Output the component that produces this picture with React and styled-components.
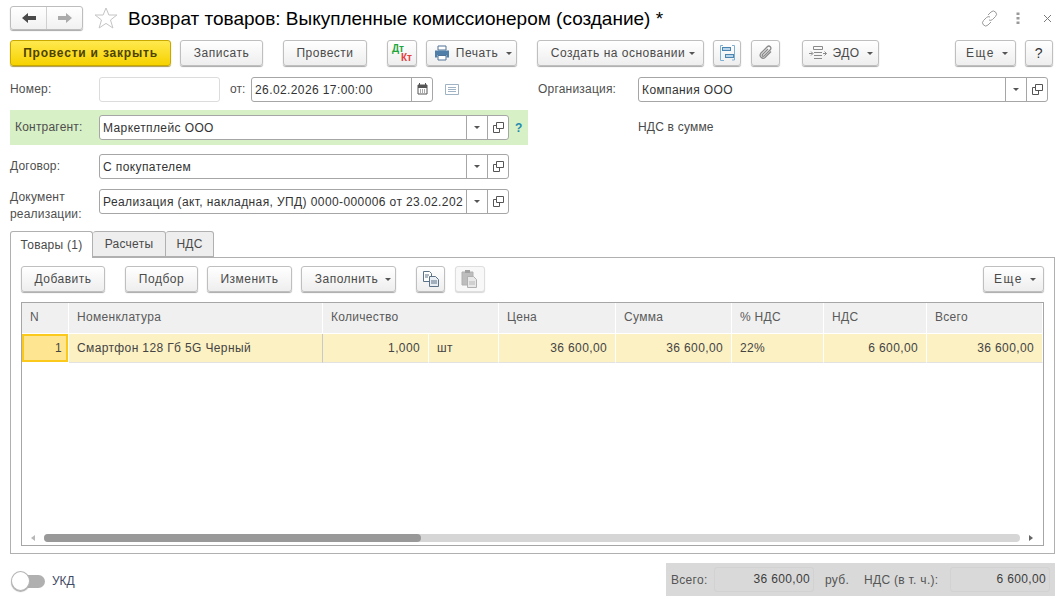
import React from 'react';
import styled, { createGlobalStyle } from 'styled-components';

const GlobalStyle = createGlobalStyle`
    html, body {
        margin: 0;
        padding: 0;
        background: #fff;
    }
    body {
        font-family: "Liberation Sans", Arial, sans-serif;
        font-size: 12px;
        color: #4a4a4a;
    }
`;

const Page = styled.div`
    width: 1063px;
    height: 605px;
    overflow: hidden;
    box-sizing: border-box;
    padding: 6px 8px 0 10px;
    background: #fff;
`;

const Header = styled.div`
    display: flex;
    align-items: center;
    height: 24px;
`;

const NavGroup = styled.div`
    display: flex;
    width: 73px;
    height: 24px;
    box-sizing: border-box;
    border: 1px solid #bdbdbd;
    border-radius: 3px;
    background: linear-gradient(#fff, #f1f1f1);
    box-shadow: 0 1px 1px #a8a8a8;
`;

const NavButton = styled.div`
    flex: 1;
    display: flex;
    align-items: center;
    justify-content: center;
    & + & {
        border-left: 1px solid #d0d0d0;
    }
`;

const StarBox = styled.div`
    display: flex;
    margin-left: 11px;
    width: 24px;
`;

const Title = styled.div`
    margin-left: 10px;
    font-size: 19px;
    color: #000;
    white-space: nowrap;
    position: relative;
    top: 1px;
`;

const HeaderTools = styled.div`
    margin-left: auto;
    padding-right: 3px;
    display: flex;
    align-items: center;
    gap: 18px;
`;

const Toolbar = styled.div`
    display: flex;
    align-items: stretch;
    height: 26px;
    margin-top: ${(p) => p.$top || 0}px;
`;

const Btn = styled.div`
    box-sizing: border-box;
    display: flex;
    align-items: center;
    justify-content: center;
    gap: ${(p) => p.$gap || 0}px;
    width: ${(p) => p.$w}px;
    margin-left: ${(p) => p.$ml || 0}px;
    padding-left: ${(p) => p.$pl || 0}px;
    height: 26px;
    border: 1px solid #bfbfbf;
    border-radius: 3px;
    background: linear-gradient(#fff, #eeeeee);
    box-shadow: 0 1px 1px #a9a9a9;
    color: #4a4a4a;
    white-space: nowrap;
    letter-spacing: ${(p) => p.$ls || 0.5}px;
    ${(p) => p.$off && 'box-shadow: 0 1px 1px #d8d8d8; border-color: #dedede; background: #f8f8f8;'}
`;

const PrimaryBtn = styled(Btn)`
    border-color: #c9a800;
    background: linear-gradient(#ffe94f, #f6d200);
    box-shadow: 0 1px 1px #a89a50;
    color: #4d4300;
    font-weight: bold;
    letter-spacing: 0.8px;
`;

const HelpBtn = styled(Btn)`
    font-size: 14px;
    color: #333;
`;

const RightBtn = styled(Btn)`
    margin-left: auto;
`;

const Caret = styled.span`
    display: inline-block;
    width: 0;
    height: 0;
    margin-left: ${(p) => p.$ml ?? 2}px;
    border-left: 3px solid transparent;
    border-right: 3px solid transparent;
    border-top: 3px solid #555;
`;

const DtKt = styled.div`
    position: relative;
    width: 20px;
    height: 18px;
    font-size: 10px;
    font-weight: bold;
    letter-spacing: 0;
`;

const Dt = styled.span`
    position: absolute;
    left: 0;
    top: -1px;
    color: #1fa53a;
`;

const Kt = styled.span`
    position: absolute;
    right: 0;
    bottom: -1px;
    color: #e2403c;
`;

const FormArea = styled.div`
    display: flex;
    margin-top: 10px;
    height: 148px;
`;

const LeftColumn = styled.div`
    width: 518px;
`;

const RightColumn = styled.div`
    margin-left: 10px;
`;

const FormRow = styled.div`
    display: flex;
    align-items: center;
    height: ${(p) => p.$h || 26}px;
    margin-top: ${(p) => p.$top || 0}px;
`;

const GreenRow = styled(FormRow)`
    background: #d7f0c6;
    padding-left: 5px;
    width: 518px;
    box-sizing: border-box;
`;

const Label = styled.div`
    width: ${(p) => p.$w}px;
    flex: none;
    color: #4f4f4f;
    line-height: 17px;
    letter-spacing: 0.2px;
`;

const TwoLineLabel = styled(Label)`
    margin-top: 8px;
`;

const Field = styled.div`
    display: flex;
    box-sizing: border-box;
    width: ${(p) => p.$w}px;
    height: ${(p) => p.$h || 25}px;
    border: 1px solid ${(p) => (p.$light ? '#dcdcdc' : '#a6a6a6')};
    border-radius: 3px;
    background: #fff;
    flex: none;
`;

const FieldValue = styled.div`
    flex: 1;
    min-width: 0;
    padding-left: 3px;
    line-height: 24px;
    color: #333;
    white-space: nowrap;
    overflow: hidden;
    letter-spacing: 0.4px;
`;

const FieldAddon = styled.div`
    box-sizing: border-box;
    flex: none;
    width: 21px;
    display: flex;
    align-items: center;
    justify-content: center;
    border-left: 1px solid #a6a6a6;
`;

const OtLabel = styled.div`
    margin: 0 5px 0 10px;
    width: 16px;
    color: #4f4f4f;
`;

const NoteBox = styled.div`
    display: flex;
    margin-left: 12px;
`;

const Help = styled.div`
    margin-left: 6px;
    color: #1f8ab0;
    font-weight: bold;
    font-size: 12px;
`;

const VatNote = styled.div`
    margin: 18px 0 0 100px;
    color: #4a4a4a;
    letter-spacing: 0.2px;
`;

const Tabs = styled.div`
    display: flex;
    height: 27px;
    margin-top: 7px;
    position: relative;
    z-index: 1;
`;

const Tab = styled.div`
    box-sizing: border-box;
    width: ${(p) => p.$w}px;
    height: ${(p) => (p.$active ? 27 : 26)}px;
    display: flex;
    align-items: center;
    justify-content: center;
    border: 1px solid #b0b0b0;
    border-left-width: ${(p) => (p.$first ? 1 : 0)}px;
    border-bottom: ${(p) => (p.$active ? 'none' : '1px solid #b0b0b0')};
    border-radius: 3px 3px 0 0;
    background: ${(p) => (p.$active ? '#fff' : '#eeeeee')};
    color: #4a4a4a;
    letter-spacing: 0.25px;
`;

const Panel = styled.div`
    box-sizing: border-box;
    width: 1045px;
    height: 297px;
    margin-top: -1px;
    border: 1px solid #b0b0b0;
    padding: 8px 10px 8px 10px;
`;

const TableBox = styled.div`
    box-sizing: border-box;
    position: relative;
    width: 1023px;
    height: 244px;
    margin-top: 10px;
    border: 1px solid #a6a6a6;
    overflow: hidden;
`;

const GridRow = styled.div`
    display: grid;
    grid-template-columns: 47px 254px 106px 70px 117px 116px 92px 103px 116px;
    height: ${(p) => p.$h}px;
`;

const HeadCell = styled.div`
    grid-column: span ${(p) => p.$span || 1};
    display: flex;
    align-items: center;
    padding: 0 0 2px 8px;
    box-sizing: border-box;
    background: #f0f0f0;
    border-right: 1px solid #fff;
    border-bottom: 1px solid #fff;
    color: #5a5a5a;
    letter-spacing: 0.3px;
`;

const Cell = styled.div`
    display: flex;
    align-items: center;
    box-sizing: border-box;
    justify-content: ${(p) => (p.$right ? 'flex-end' : 'flex-start')};
    padding: 0 8px;
    background: #fcf1c3;
    border-right: 1px solid ${(p) => (p.$dark ? '#c9c9c9' : '#fff')};
    border-bottom: 1px solid #e2e2e2;
    color: #444;
    white-space: nowrap;
    letter-spacing: 0.37px;
`;

const CurrentCell = styled(Cell)`
    background: #fee591;
    border: 2px solid #fbc91b;
    padding: 0 4px;
    margin-right: 1px;
    margin-bottom: 1px;
`;

const ScrollBar = styled.div`
    position: absolute;
    left: 0;
    right: 0;
    bottom: 3px;
    height: 8px;
    display: flex;
    align-items: center;
`;

const ScrollArrow = styled.span`
    flex: none;
    width: 0;
    height: 0;
    margin-left: ${(p) => p.$ml}px;
    border-top: 3px solid transparent;
    border-bottom: 3px solid transparent;
    ${(p) => (p.$left ? 'border-right: 4px solid #b8b8b8;' : 'border-left: 4px solid #666;')}
`;

const ScrollTrack = styled.div`
    flex: none;
    width: 976px;
    height: 8px;
    margin-left: 9px;
    border-radius: 4px;
    background: #d6d6d6;
`;

const ScrollThumb = styled.div`
    height: 8px;
    border-radius: 4px;
    background: #999;
`;

const Footer = styled.div`
    display: flex;
    align-items: center;
    height: 33px;
    margin-top: 9px;
    padding-left: 1px;
`;

const SwitchBox = styled.div`
    position: relative;
    width: 34px;
    height: 20px;
    flex: none;
    margin-top: 2px;
`;

const SwitchTrack = styled.div`
    position: absolute;
    left: 8px;
    right: 0;
    top: 4px;
    height: 13px;
    border-radius: 7px;
    background: #b0b0b0;
`;

const SwitchKnob = styled.div`
    position: absolute;
    left: 0;
    top: 0;
    box-sizing: border-box;
    width: 19px;
    height: 20px;
    border-radius: 50%;
    border: 1px solid #b5b5b5;
    background: #fff;
    box-shadow: 0 1px 1px #aaa;
`;

const SwitchLabel = styled.div`
    margin: 2px 0 0 7px;
    color: #3f4a66;
`;

const Totals = styled.div`
    display: flex;
    align-items: center;
    box-sizing: border-box;
    width: 389px;
    height: 33px;
    margin-left: auto;
    padding-left: 5px;
    background: #d9d9d9;
`;

const TotalLabel = styled.div`
    width: ${(p) => p.$w}px;
    flex: none;
    color: #555;
    letter-spacing: 0.3px;
    white-space: nowrap;
`;

const TotalValue = styled.div`
    box-sizing: border-box;
    flex: none;
    width: 100px;
    height: 25px;
    line-height: 23px;
    padding-right: 3px;
    text-align: right;
    border: 1px solid #d2d2d2;
    border-radius: 3px;
    color: #3d3d3d;
    letter-spacing: 0.35px;
    margin-right: ${(p) => p.$mr || 0}px;
`;

const ArrowIcon = ({ dir, color }) => (
    <svg width="16" height="12" viewBox="0 0 16 12">
        <path
            d={dir === 'left' ? 'M1 6 7 1v3h8v4H7v3z' : 'M15 6 9 1v3H1v4h8v3z'}
            fill={color}
        />
    </svg>
);

const StarIcon = () => (
    <svg width="24" height="24" viewBox="0 0 24 24">
        <path
            d="M12 2l2.900 7h8l-6.400 5 2.400 8L12 17.400 5.100 22l2.400-8L1.100 9h8z"
            fill="#fff"
            stroke="#c4c4c4"
        />
    </svg>
);

const LinkIcon = () => (
    <svg width="17" height="17" viewBox="0 0 17 17" fill="none" stroke="#9a9a9a" strokeWidth="1">
        <path d="M7 5l3-3a3 3 0 0 1 4.500 4.500l-3 3a3 3 0 0 1-3.500.5" />
        <path d="M10 12l-3 3a3 3 0 0 1-4.500-4.500l3-3a3 3 0 0 1 3.500-.5" />
    </svg>
);

const DotsIcon = () => (
    <svg width="4" height="14" viewBox="0 0 4 14">
        <rect x="0.500" y="1.500" width="3" height="2.500" fill="#9a9a9a" />
        <rect x="0.500" y="6" width="3" height="2.500" fill="#9a9a9a" />
        <rect x="0.500" y="10.500" width="3" height="2.500" fill="#9a9a9a" />
    </svg>
);

const CloseIcon = () => (
    <svg width="14" height="9" viewBox="-5 0 14 9" fill="none" stroke="#7a7a7a">
        <path d="M1 1l7 7M8 1 1 8" />
    </svg>
);

const PrinterIcon = () => (
    <svg width="16" height="16" viewBox="0 0 16 16">
        <path d="M4 1h8v4H4z" fill="#fff" stroke="#4f7396" />
        <path d="M1 5.500h14v7h-2.500V10h-9v2.500H1z" fill="#4f7fa8" />
        <path d="M4 10.500h8v4.500H4z" fill="#fff" stroke="#4f7396" />
    </svg>
);

const StructureIcon = () => (
    <svg width="17" height="18" viewBox="0 0 17 18">
        <path d="M4 1.500H1.500v15H5M13 1.500h2.500V16H13" fill="none" stroke="#7fb0d4" />
        <rect x="3.500" y="3.500" width="8" height="3" fill="#b7d4ea" stroke="#4c86b0" />
        <rect x="6.500" y="10.500" width="8" height="3" fill="#b7d4ea" stroke="#4c86b0" />
    </svg>
);

const ClipIcon = () => (
    <svg width="16" height="16" viewBox="0 0 16 16" fill="none" stroke="#8a8a8a" strokeWidth="1.300">
        <path d="M13 6.500l-6 6a3 3 0 0 1-4.200-4.200l6.500-6.500a2.100 2.100 0 0 1 3 3L6 11a1 1 0 0 1-1.500-1.500L10 4" />
    </svg>
);

const EdoIcon = () => (
    <svg width="19" height="16" viewBox="0 0 19 16" fill="none" stroke="#8a8a8a">
        <path d="M5.500 1.500h9v3h-9z" />
        <path d="M6 7.500h8M6 10.500h8M6 13.500h8" />
        <path d="M1 8.500h3.500M3 6.500l2 2-2 2" />
        <path d="M15 8.500h3.500M16.500 6.500l2 2-2 2" />
    </svg>
);

const CalendarIcon = () => (
    <svg width="11" height="12" viewBox="0 0 11 12">
        <path d="M1 2h9v9H1z" fill="#fff" stroke="#555" />
        <path d="M1 2h9v3H1z" fill="#555" />
        <path d="M2.500 0v2M8.500 0v2" stroke="#555" />
        <path d="M3 6.500h1v1H3zM5 6.500h1v1H5zM7 6.500h1v1H7zM3 8.500h1v1H3zM5 8.500h1v1H5zM7 8.500h1v1H7z" fill="#555" />
    </svg>
);

const NoteIcon = () => (
    <svg width="14" height="11" viewBox="0 0 14 11" fill="none" stroke="#9fb3c4">
        <path d="M.5.500h13v10H.5z" />
        <path d="M3 3.500h8M3 5.500h8M3 7.500h8" />
    </svg>
);

const OpenIcon = () => (
    <svg width="11" height="11" viewBox="0 0 11 11" fill="none" stroke="#555">
        <path d="M3.500.500h7v6h-7z" />
        <path d="M3.500 3.500h-3v7h6V7" />
    </svg>
);

const CopyIcon = () => (
    <svg width="18" height="18" viewBox="0 0 18 18">
        <path d="M1.500 1.500h6l2 2v8h-8z" fill="#fff" stroke="#5c7387" />
        <path d="M7.500 6.500h6l3 3v7h-9z" fill="#e8eef3" stroke="#5c7387" />
        <path d="M3 5h4M3 7h3M9 11h6M9 13h6" stroke="#5c7387" />
    </svg>
);

const PasteIcon = () => (
    <svg width="18" height="20" viewBox="0 0 18 20">
        <path d="M1 3h11v13H1z" fill="#bdbdbd" stroke="#b0b0b0" />
        <path d="M4 1h5v3H4z" fill="#a0a0a0" />
        <path d="M6.500 7.500h6l3 3v8h-9z" fill="#e8e8e8" stroke="#b0b0b0" />
        <path d="M8 13h6M8 15h6" stroke="#b8b8b8" />
    </svg>
);

const SelectField = ({ w, value }) => (
    <Field $w={w}>
        <FieldValue>{value}</FieldValue>
        <FieldAddon>
            <Caret $ml={0} />
        </FieldAddon>
        <FieldAddon>
            <OpenIcon />
        </FieldAddon>
    </Field>
);

const App = () => {
    return (
        <Page>
            <GlobalStyle />
            <Header>
                <NavGroup>
                    <NavButton>
                        <ArrowIcon dir="left" color="#4a4a4a" />
                    </NavButton>
                    <NavButton>
                        <ArrowIcon dir="right" color="#aaaaaa" />
                    </NavButton>
                </NavGroup>
                <StarBox>
                    <StarIcon />
                </StarBox>
                <Title>Возврат товаров: Выкупленные комиссионером (создание) *</Title>
                <HeaderTools>
                    <LinkIcon />
                    <DotsIcon />
                    <CloseIcon />
                </HeaderTools>
            </Header>

            <Toolbar $top={10}>
                <PrimaryBtn $w={161}>Провести и закрыть</PrimaryBtn>
                <Btn $w={83} $ml={9}>Записать</Btn>
                <Btn $w={84} $ml={20}>Провести</Btn>
                <Btn $w={30} $ml={20}>
                    <DtKt>
                        <Dt>Дт</Dt>
                        <Kt>Кт</Kt>
                    </DtKt>
                </Btn>
                <Btn $w={91} $ml={9} $gap={6} $pl={3}>
                    <PrinterIcon />
                    Печать
                    <Caret />
                </Btn>
                <Btn $w={167} $ml={20} $gap={2} $pl={5}>
                    Создать на основании
                    <Caret />
                </Btn>
                <Btn $w={28} $ml={9}>
                    <StructureIcon />
                </Btn>
                <Btn $w={29} $ml={10}>
                    <ClipIcon />
                </Btn>
                <Btn $w={77} $ml={22} $gap={5}>
                    <EdoIcon />
                    ЭДО
                    <Caret />
                </Btn>
                <Btn $w={61} $ml={76} $gap={5} $pl={3} $ls={1.5}>
                    Еще
                    <Caret />
                </Btn>
                <HelpBtn $w={28} $ml={9}>?</HelpBtn>
            </Toolbar>

            <FormArea>
                <LeftColumn>
                    <FormRow>
                        <Label $w={89}>Номер:</Label>
                        <Field $w={121} $light />
                        <OtLabel>от:</OtLabel>
                        <Field $w={182}>
                            <FieldValue>26.02.2026 17:00:00</FieldValue>
                            <FieldAddon>
                                <CalendarIcon />
                            </FieldAddon>
                        </Field>
                        <NoteBox>
                            <NoteIcon />
                        </NoteBox>
                    </FormRow>
                    <GreenRow $h={35} $top={8}>
                        <Label $w={84}>Контрагент:</Label>
                        <SelectField w={410} value="Маркетплейс ООО" />
                        <Help>?</Help>
                    </GreenRow>
                    <FormRow $h={25} $top={9}>
                        <Label $w={89}>Договор:</Label>
                        <SelectField w={410} value="С покупателем" />
                    </FormRow>
                    <FormRow $h={25} $top={10}>
                        <TwoLineLabel $w={89}>
                            Документ
                            <br />
                            реализации:
                        </TwoLineLabel>
                        <SelectField w={410} value="Реализация (акт, накладная, УПД) 0000-000006 от 23.02.202" />
                    </FormRow>
                </LeftColumn>
                <RightColumn>
                    <FormRow>
                        <Label $w={100}>Организация:</Label>
                        <SelectField w={410} value="Компания ООО" />
                    </FormRow>
                    <VatNote>НДС в сумме</VatNote>
                </RightColumn>
            </FormArea>

            <Tabs>
                <Tab $w={83} $active $first>Товары (1)</Tab>
                <Tab $w={73}>Расчеты</Tab>
                <Tab $w={48}>НДС</Tab>
            </Tabs>
            <Panel>
                <Toolbar>
                    <Btn $w={84}>Добавить</Btn>
                    <Btn $w={73} $ml={20}>Подбор</Btn>
                    <Btn $w={85} $ml={9}>Изменить</Btn>
                    <Btn $w={95} $ml={9} $gap={5} $pl={9}>
                        Заполнить
                        <Caret />
                    </Btn>
                    <Btn $w={29} $ml={20}>
                        <CopyIcon />
                    </Btn>
                    <Btn $w={30} $ml={10} $off>
                        <PasteIcon />
                    </Btn>
                    <RightBtn $w={61} $gap={5} $pl={3} $ls={1.5}>
                        Еще
                        <Caret />
                    </RightBtn>
                </Toolbar>
                <TableBox>
                    <GridRow $h={31}>
                        <HeadCell>N</HeadCell>
                        <HeadCell>Номенклатура</HeadCell>
                        <HeadCell $span={2}>Количество</HeadCell>
                        <HeadCell>Цена</HeadCell>
                        <HeadCell>Сумма</HeadCell>
                        <HeadCell>% НДС</HeadCell>
                        <HeadCell>НДС</HeadCell>
                        <HeadCell>Всего</HeadCell>
                    </GridRow>
                    <GridRow $h={29}>
                        <CurrentCell $right>1</CurrentCell>
                        <Cell $dark>Смартфон 128 Гб 5G Черный</Cell>
                        <Cell $right>1,000</Cell>
                        <Cell>шт</Cell>
                        <Cell $right>36 600,00</Cell>
                        <Cell $right>36 600,00</Cell>
                        <Cell>22%</Cell>
                        <Cell $right>6 600,00</Cell>
                        <Cell $right>36 600,00</Cell>
                    </GridRow>
                    <ScrollBar>
                        <ScrollArrow $left $ml={9} />
                        <ScrollTrack>
                            <ScrollThumb style={{ width: `${(377 / 976) * 100}%` }} />
                        </ScrollTrack>
                        <ScrollArrow $ml={9} />
                    </ScrollBar>
                </TableBox>
            </Panel>

            <Footer>
                <SwitchBox>
                    <SwitchTrack />
                    <SwitchKnob />
                </SwitchBox>
                <SwitchLabel>УКД</SwitchLabel>
                <Totals>
                    <TotalLabel $w={43}>Всего:</TotalLabel>
                    <TotalValue $mr={11}>36 600,00</TotalValue>
                    <TotalLabel $w={39}>руб.</TotalLabel>
                    <TotalLabel $w={86}>НДС (в т. ч.):</TotalLabel>
                    <TotalValue>6 600,00</TotalValue>
                </Totals>
            </Footer>
        </Page>
    );
};

export default App;
